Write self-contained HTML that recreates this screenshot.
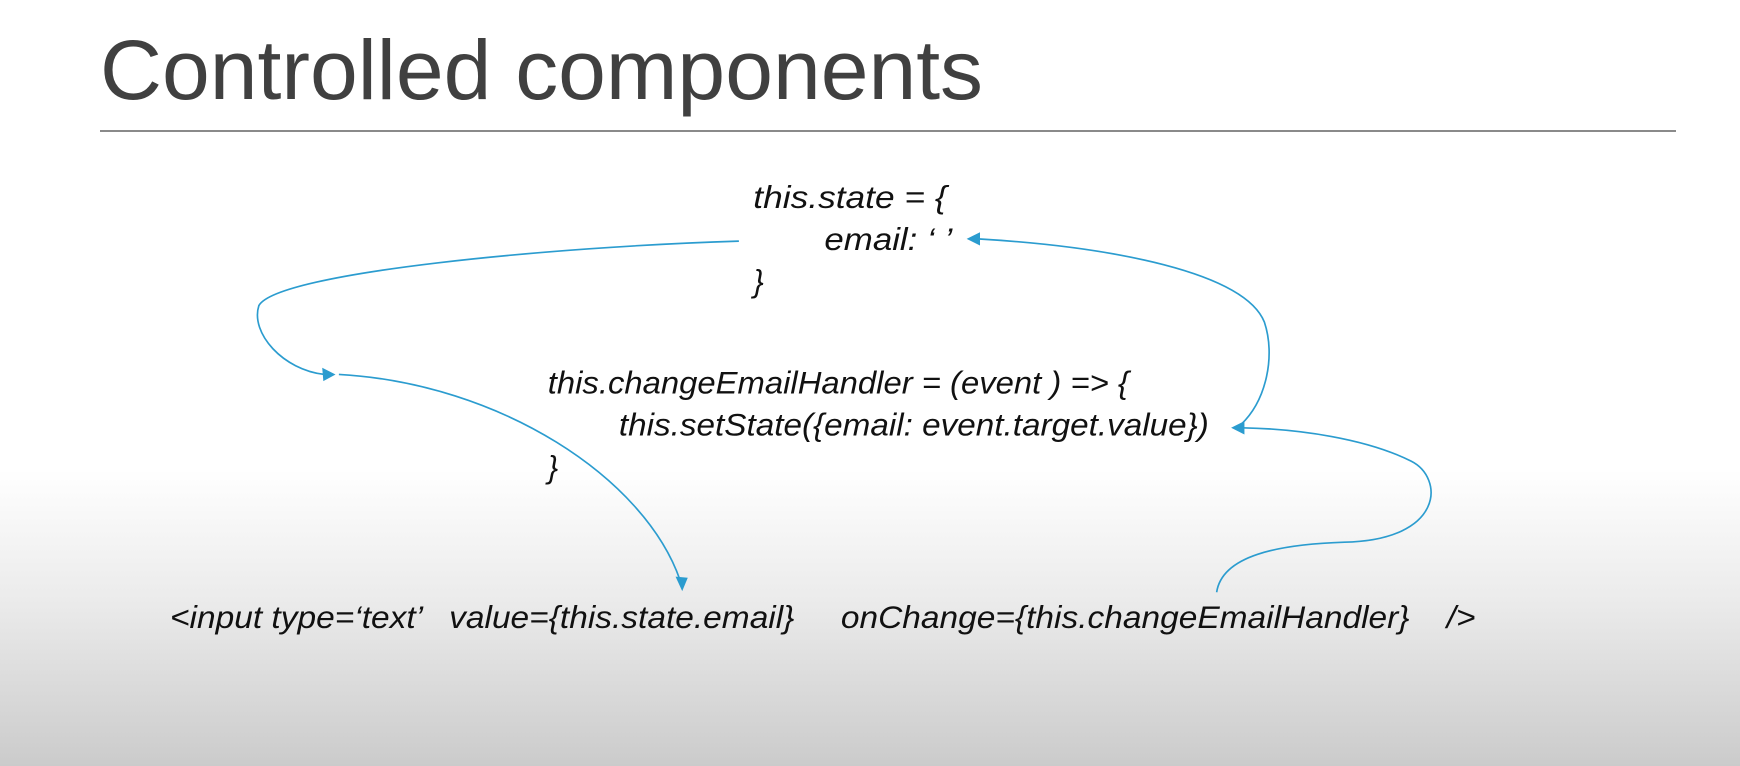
<!DOCTYPE html>
<html><head><meta charset="utf-8"><style>
html,body{margin:0;padding:0;}
body{width:1740px;height:766px;overflow:hidden;background:linear-gradient(to bottom,#fff 0px,#fff 470px,#ebebeb 600px,#cbcbcb 766px);}
svg{position:absolute;left:0;top:0;}
text{font-family:"Liberation Sans",sans-serif;}
.c{font-style:italic;font-size:28px;fill:#111;}
</style></head><body>
<svg width="1740" height="766" viewBox="0 0 1740 766">
<text x="100" y="99" font-size="84" fill="#404040" textLength="883" lengthAdjust="spacingAndGlyphs">Controlled components</text>
<line x1="100" y1="131" x2="1676" y2="131" stroke="#8a8a8a" stroke-width="2"/>
<g transform="scale(1.1111)">
<text class="c" x="678" y="187" textLength="174" lengthAdjust="spacingAndGlyphs">this.state = {</text>
<text class="c" x="742" y="225" textLength="115" lengthAdjust="spacingAndGlyphs">email: ‘ ’</text>
<text class="c" x="678" y="263">}</text>
<text class="c" x="493" y="354" textLength="523" lengthAdjust="spacingAndGlyphs">this.changeEmailHandler = (event ) =&gt; {</text>
<text class="c" x="557" y="392" textLength="531" lengthAdjust="spacingAndGlyphs">this.setState({email: event.target.value})</text>
<text class="c" x="493" y="430">}</text>
<text class="c" x="153" y="565" textLength="1175" lengthAdjust="spacingAndGlyphs" xml:space="preserve">&lt;input type=‘text’   value={this.state.email}     onChange={this.changeEmailHandler}    /&gt;</text>
<g fill="none" stroke="#2b9ccf" stroke-width="1.5">
<path d="M665 217 C 500 222 250 245 233 275 C 225 300 255 333 292 337"/>
<path d="M305 337 C 450 345 580 430 612 522"/>
<path d="M1095 533 C 1100 500 1150 490 1210 488 C 1300 486 1300 430 1270 415 C 1230 395 1170 386 1118 385"/>
<path d="M1117 382 C 1140 360 1148 320 1138 290 C 1120 245 1000 222 880 215"/>
</g>
<g fill="#2b9ccf">
<polygon points="302,337 290,331 291,343"/>
<polygon points="614,532 608,519 619,520"/>
<polygon points="1108,385 1120,379 1120,391"/>
<polygon points="870,215 882,209 882,221"/>
</g>
</g>
</svg>
</body></html>
